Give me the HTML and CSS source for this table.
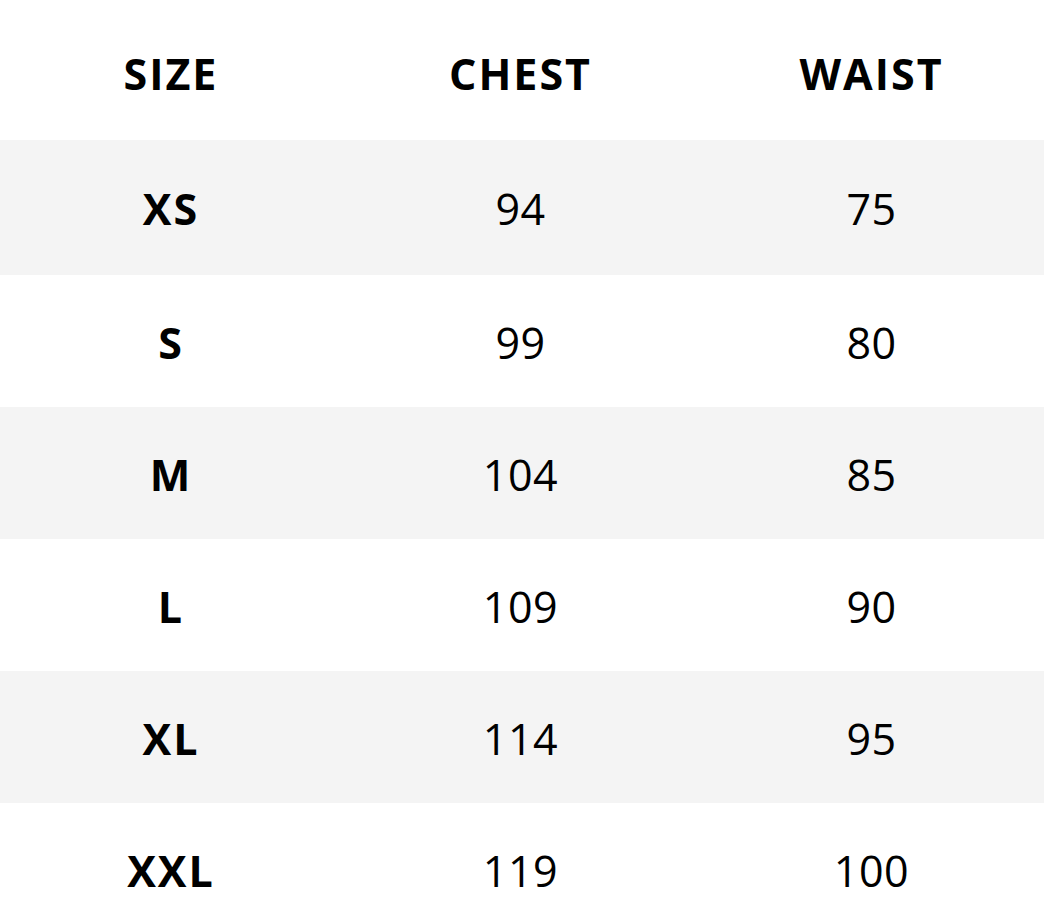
FILE: index.html
```html
<!DOCTYPE html>
<html>
<head>
<meta charset="utf-8">
<link rel="stylesheet" href="styles.css">
</head>
<body>
<div class="table">
  <div class="row head">
    <div class="cell">SIZE</div><div class="cell">CHEST</div><div class="cell">WAIST</div>
  </div>
  <div class="row alt first"><div class="cell size">XS</div><div class="cell">94</div><div class="cell">75</div></div>
  <div class="row"><div class="cell size">S</div><div class="cell">99</div><div class="cell">80</div></div>
  <div class="row alt"><div class="cell size">M</div><div class="cell">104</div><div class="cell">85</div></div>
  <div class="row"><div class="cell size">L</div><div class="cell">109</div><div class="cell">90</div></div>
  <div class="row alt"><div class="cell size">XL</div><div class="cell">114</div><div class="cell">95</div></div>
  <div class="row"><div class="cell size">XXL</div><div class="cell">119</div><div class="cell">100</div></div>
</div>
</body>
</html>
```
FILE: styles.css
```css
html, body { margin: 0; padding: 0; background: #fff; }
body { font-family: "Open Sans", "DejaVu Sans", sans-serif; color: #000; }
.table { width: 1044px; }
.row {
  display: grid;
  grid-template-columns: 342px 357px 345px;
  height: 132px;
  align-items: center;
}
.row.head { height: 140px; }
.row.first { height: 135px; }
.row.alt { background: #f4f4f4; }
.cell {
  text-align: center;
  font-size: 43px;
  line-height: 1;
  font-weight: 400;
  letter-spacing: 0.5px;
  padding-top: 2px;
}
.head .cell { padding-top: 6px; }
.head .cell, .cell.size { font-weight: 700; letter-spacing: 2px; }
```
